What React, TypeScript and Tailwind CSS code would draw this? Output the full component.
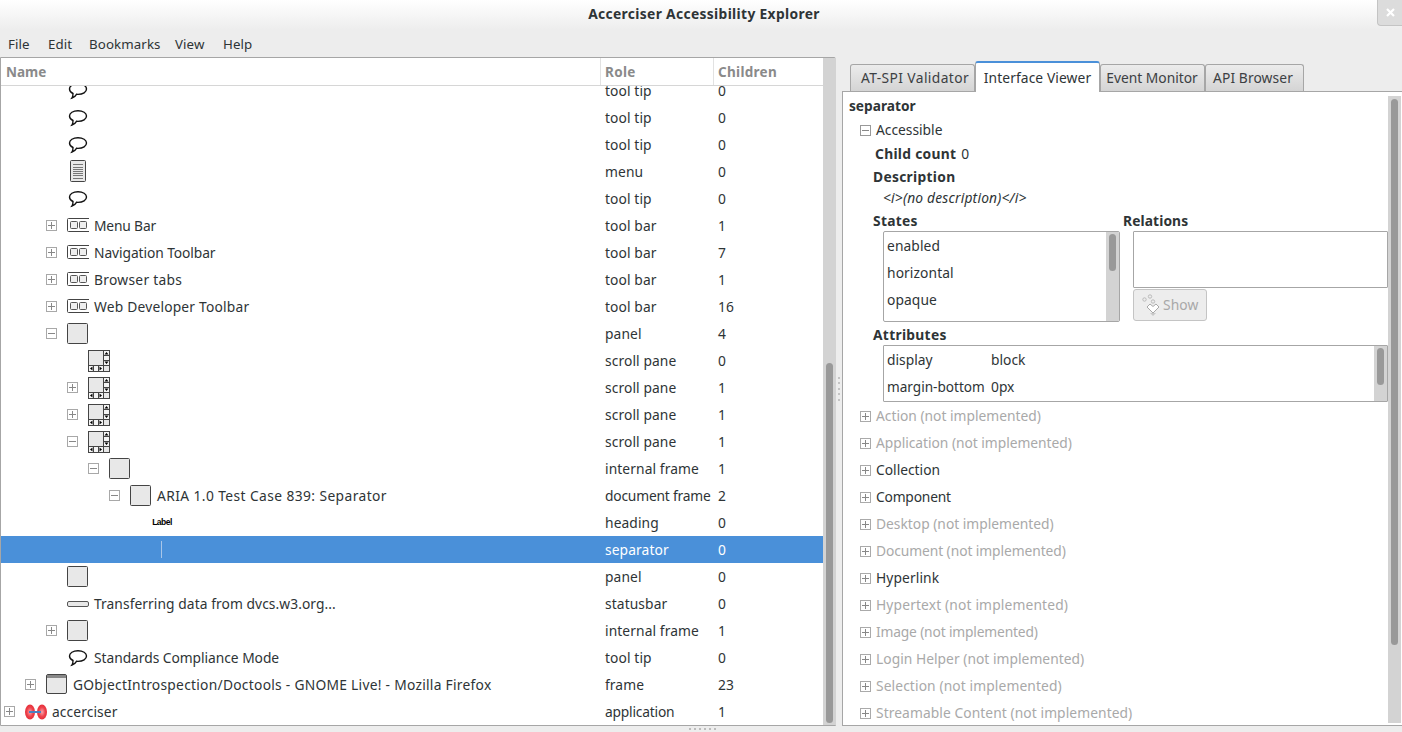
import React from "react";

const F = "[font-family:'Noto_Sans',sans-serif]";

function Bubble() {
  return (
    <svg width="22" height="20" viewBox="0 0 22 20" fill="none">
      <path d="M2.500 8C2.500 5 6 2.700 11 2.700S19.500 5 19.500 8 16 13.400 11 13.400C10.500 13.400 10 13.400 9.500 13.300 8.500 15 7 16.500 5 17 5.800 16 6 15 6 12.500 3.800 11.500 2.500 10 2.500 8z" fill="#fff" stroke="#111" strokeWidth="1.400" />
    </svg>
  );
}
function MenuIcon() {
  return (
    <svg width="22" height="23" viewBox="0 0 22 23" fill="none">
      <rect x="3.500" y="0.500" width="15" height="21" rx="1" fill="#e8e8e8" stroke="#444" />
      {[4, 7, 9, 11, 13, 15, 18].map((y) => (
        <path key={y} d={`M6 ${y + 0.5}h10`} stroke="#777" />
      ))}
    </svg>
  );
}
function ToolbarIcon() {
  return (
    <svg width="22" height="15" viewBox="0 0 22 15" fill="none">
      <path d="M22 .5H1.500a1 1 0 0 0-1 1v11a1 1 0 0 0 1 1H22" stroke="#444" />
      <rect x="3.500" y="3.500" width="7" height="7" rx="1" fill="#eee" stroke="#555" />
      <rect x="12.500" y="3.500" width="7" height="7" rx="1" fill="#eee" stroke="#555" />
    </svg>
  );
}
function PanelIcon() {
  return (
    <svg width="22" height="22" viewBox="0 0 22 22" fill="none">
      <rect x="0.500" y="0.500" width="20" height="20" rx="1" fill="#e8e8e8" stroke="#444" />
    </svg>
  );
}
function ScrollPaneIcon() {
  return (
    <svg width="22" height="22" viewBox="0 0 22 22" fill="none">
      <g shapeRendering="crispEdges">
        <rect x="0.500" y="0.500" width="21" height="21" fill="#e8e8e8" stroke="#444" />
        <rect x="16" y="1" width="5" height="14" fill="#f4f4f4" />
        <rect x="1" y="16" width="14" height="5" fill="#f4f4f4" />
        <path d="M15.500 1v20M1 15.500h20M15.500 5.500h6M15.500 10.500h6M5.500 15.500v6M10.500 15.500v6" stroke="#444" />
      </g>
      <path d="M18.500 2l2 2.500h-4zM18.500 14l-2-2.500h4zM2 18.500l2.500-2v4zM14 18.500l-2.500-2v4z" fill="#000" />
    </svg>
  );
}
function StatusIcon() {
  return (
    <svg width="22" height="8" viewBox="0 0 22 8" fill="none">
      <rect x="0.500" y="1.500" width="21" height="5" rx="1.500" fill="#e8e8e8" stroke="#555" />
    </svg>
  );
}
function FrameIcon() {
  return (
    <svg width="22" height="21" viewBox="0 0 22 21" fill="none">
      <rect x="0.500" y="0.500" width="20" height="19" rx="1.500" fill="#e8e8e8" stroke="#444" />
      <rect x="1" y="1" width="19" height="3" fill="#888" />
    </svg>
  );
}
function LogoIcon() {
  return (
    <svg width="22" height="16" viewBox="0 0 22 16" fill="none">
      <defs>
        <radialGradient id="lg" cx="50%" cy="50%" r="62%">
          <stop offset="0" stopColor="#f8a8ae" />
          <stop offset="0.5" stopColor="#ee424c" />
          <stop offset="1" stopColor="#e0242e" />
        </radialGradient>
      </defs>
      <ellipse cx="5" cy="8" rx="5" ry="7.500" fill="url(#lg)" />
      <ellipse cx="17" cy="8" rx="5" ry="7.500" fill="url(#lg)" />
      <rect x="4" y="7" width="12" height="2" fill="#4a7fc0" />
    </svg>
  );
}
function LabelIcon() {
  return (
    <span className="block w-[22px] text-center font-bold text-[8.500px] leading-none tracking-[-0.500px] text-black [font-family:'Liberation_Sans',sans-serif]">
      Label
    </span>
  );
}
function SepIcon() {
  return <span className="block w-[1px] h-[17px] ml-[10px] bg-[#a9c6e8]" />;
}

function Exp({ open, color = "#a8a8a8" }: { open: boolean; color?: string }) {
  return (
    <svg width="11" height="11" viewBox="0 0 11 11" fill="none" shapeRendering="crispEdges" className="shrink-0">
      <rect x="0.500" y="0.500" width="10" height="10" rx="1" fill="#fff" stroke={color} />
      <path d="M2 5.500h7" stroke="#888" />
      {!open && <path d="M5.500 2v7" stroke="#888" />}
    </svg>
  );
}

type Row = {
  d: number;
  exp?: "o" | "c";
  icon: React.ReactNode;
  name?: string;
  tr?: string;
  role: string;
  rt?: string;
  n: string;
  sel?: boolean;
};

const rows: Row[] = [
  { d: 2, icon: <Bubble />, role: "tool tip", n: "0" },
  { d: 2, icon: <Bubble />, role: "tool tip", n: "0" },
  { d: 2, icon: <Bubble />, role: "tool tip", n: "0" },
  { d: 2, icon: <MenuIcon />, role: "menu", n: "0" },
  { d: 2, icon: <Bubble />, role: "tool tip", n: "0" },
  { d: 2, exp: "c", icon: <ToolbarIcon />, name: "Menu Bar", tr: "tracking-[-0.170px]", role: "tool bar", n: "1" },
  { d: 2, exp: "c", icon: <ToolbarIcon />, name: "Navigation Toolbar", tr: "tracking-[-0.080px]", role: "tool bar", n: "7" },
  { d: 2, exp: "c", icon: <ToolbarIcon />, name: "Browser tabs", tr: "tracking-[0.280px]", role: "tool bar", n: "1" },
  { d: 2, exp: "c", icon: <ToolbarIcon />, name: "Web Developer Toolbar", tr: "tracking-[0.200px]", role: "tool bar", n: "16" },
  { d: 2, exp: "o", icon: <PanelIcon />, role: "panel", n: "4" },
  { d: 3, icon: <ScrollPaneIcon />, role: "scroll pane", n: "0" },
  { d: 3, exp: "c", icon: <ScrollPaneIcon />, role: "scroll pane", n: "1" },
  { d: 3, exp: "c", icon: <ScrollPaneIcon />, role: "scroll pane", n: "1" },
  { d: 3, exp: "o", icon: <ScrollPaneIcon />, role: "scroll pane", n: "1" },
  { d: 4, exp: "o", icon: <PanelIcon />, role: "internal frame", n: "1" },
  { d: 5, exp: "o", icon: <PanelIcon />, name: "ARIA 1.0 Test Case 839: Separator", tr: "tracking-[0.410px]", role: "document frame", rt: "tracking-[-0.200px]", n: "2" },
  { d: 6, icon: <LabelIcon />, role: "heading", n: "0" },
  { d: 6, icon: <SepIcon />, role: "separator", n: "0", sel: true },
  { d: 2, icon: <PanelIcon />, role: "panel", n: "0" },
  { d: 2, icon: <StatusIcon />, name: "Transferring data from dvcs.w3.org...", tr: "tracking-[0.070px]", role: "statusbar", n: "0" },
  { d: 2, exp: "c", icon: <PanelIcon />, role: "internal frame", n: "1" },
  { d: 2, icon: <Bubble />, name: "Standards Compliance Mode", tr: "tracking-[-0.040px]", role: "tool tip", n: "0" },
  { d: 1, exp: "c", icon: <FrameIcon />, name: "GObjectIntrospection/Doctools - GNOME Live! - Mozilla Firefox", tr: "tracking-[0.270px]", role: "frame", n: "23" },
  { d: 0, exp: "c", icon: <LogoIcon />, name: "accerciser", tr: "tracking-[0.100px]", role: "application", rt: "tracking-[-0.200px]", n: "1" },
];

const sections: [string, boolean, string][] = [
  ["Action (not implemented)", true, ""],
  ["Application (not implemented)", true, "tracking-[-0.030px]"],
  ["Collection", false, ""],
  ["Component", false, "tracking-[-0.200px]"],
  ["Desktop (not implemented)", true, ""],
  ["Document (not implemented)", true, "tracking-[-0.080px]"],
  ["Hyperlink", false, "tracking-[0.100px]"],
  ["Hypertext (not implemented)", true, "tracking-[0.150px]"],
  ["Image (not implemented)", true, "tracking-[-0.170px]"],
  ["Login Helper (not implemented)", true, "tracking-[0.030px]"],
  ["Selection (not implemented)", true, "tracking-[0.110px]"],
  ["Streamable Content (not implemented)", true, "tracking-[0.080px]"],
];

function VScroll({ thumb }: { thumb: string }) {
  return (
    <div className="w-[13px] shrink-0 bg-[#d3d3d3] flex justify-center pt-[2px]">
      <div className={`w-[7px] rounded-[4px] bg-[#999] ${thumb}`} />
    </div>
  );
}

function HDots() {
  return (
    <div className="flex gap-[3px]">
      {[0, 1, 2, 3, 4, 5].map((i) => (
        <span key={i} className="w-[2px] h-[2px] bg-[#bcbcbc]" />
      ))}
    </div>
  );
}
function VDots() {
  return (
    <div className="flex flex-col gap-[3.500px]">
      {[0, 1, 2, 3, 4].map((i) => (
        <span key={i} className="w-[2px] h-[2px] bg-[#c4c4c4]" />
      ))}
    </div>
  );
}

const menus: [string, string][] = [
  ["File", "w-[40px]"],
  ["Edit", "w-[41px]"],
  ["Bookmarks", "w-[86px]"],
  ["View", "w-[48px]"],
  ["Help", "w-[40px]"],
];

const tabs: [string, string, string][] = [
  ["AT-SPI Validator", "w-[125px]", "pl-[5px] tracking-[0.400px]"],
  ["Interface Viewer", "w-[125px]", "tracking-[0.100px]"],
  ["Event Monitor", "w-[105px]", "pr-[1px]"],
  ["API Browser", "w-[99px]", "pr-[3px] tracking-[0.100px]"],
];

export default function App() {
  return (
    <div className={`w-[1402px] h-[732px] overflow-hidden flex flex-col bg-[#ededed] text-[#2e3436] text-[13.800px] ${F}`}>
      <div className="h-[30px] shrink-0 relative flex items-center justify-center pl-[6px] pb-[2px] bg-gradient-to-b from-white to-[#ededed]">
        <span className="font-bold text-[#2e3436] tracking-[0.350px]">Accerciser Accessibility Explorer</span>
        <div className="absolute right-0 top-0 w-[25px] h-[26px] rounded-bl-[4px] border-l border-b border-[#c4c4c4] bg-[#dcdcdc] flex items-center justify-center">
          <svg width="9" height="9" viewBox="0 0 9 9"><path d="M1 1l7 7M8 1L1 8" stroke="#fff" strokeWidth="2.200" /></svg>
        </div>
      </div>
      <div className="h-[27px] shrink-0 flex items-center pl-[8px] pt-[2px] text-[13.300px] tracking-[0.100px]">
        {menus.map(([t, w]) => <span key={t} className={w}>{t}</span>)}
      </div>
      <div className="h-[669px] shrink-0 flex">
        <div className="w-[836px] shrink-0 flex border border-[#a6a6a6] rounded-tr-[2px] bg-white">
          <div className="w-[822px] shrink-0 flex flex-col overflow-hidden">
            <div className="h-[28px] shrink-0 flex items-center border-b border-[#d6d6d6] font-bold text-[#8a8a8a] text-[13.500px] tracking-[0.300px] bg-white relative z-10">
              <div className="w-[600px] pl-[5px] pt-[2px] h-full flex items-center border-r border-[#e2e2e2] tracking-[0px]">Name</div>
              <div className="w-[113px] pl-[4px] pt-[2px] h-full flex items-center border-r border-[#e2e2e2]">Role</div>
              <div className="pl-[4px] pt-[2px]">Children</div>
            </div>
            <div className="flex-1 overflow-hidden">
              <div className="-mt-[9px]">
                {rows.map((r, i) => (
                  <div key={i} className={`h-[27px] flex items-center ${r.sel ? "bg-[#4a90d9] text-white" : ""}`}>
                    <div className="w-[601px] shrink-0 flex items-center" style={{ paddingLeft: r.d * 21 + 3 }}>
                      <span className="w-[11px] h-[11px] shrink-0">{r.exp && <Exp open={r.exp === "o"} />}</span>
                      <span className="w-[22px] ml-[10px] shrink-0 flex items-center">{r.icon}</span>
                      {r.name && <span className={`ml-[5px] pt-[1px] whitespace-nowrap ${r.tr ?? ""}`}>{r.name}</span>}
                    </div>
                    <div className={`w-[113px] shrink-0 pl-[3px] pt-[1px] whitespace-nowrap ${r.rt ?? "tracking-[0.100px]"}`}>{r.role}</div>
                    <div className="pl-[3px] pt-[1px]">{r.n}</div>
                  </div>
                ))}
              </div>
            </div>
          </div>
          <div className="w-[13px] shrink-0 bg-[#d3d3d3] flex justify-center items-end pb-[2px]">
            <div className="w-[7px] h-[360px] rounded-[4px] bg-[#999]" />
          </div>
        </div>

        <div className="w-[6px] shrink-0 flex items-center justify-center pb-[6px]"><VDots /></div>

        <div className="flex-1 flex flex-col">
          <div className="h-[34px] shrink-0 flex items-end pl-[8px]">
            {tabs.map(([t, w, x], i) =>
              i === 1 ? (
                <div key={t} className={`${w} ${x} h-[31px] -mb-[1px] pt-[1px] relative z-10 flex items-center justify-center bg-white border-x border-t-2 border-[#a6a6a6] border-t-[#4a90d9] rounded-t-[3px] text-[#2e3436]`}>{t}</div>
              ) : (
                <div key={t} className={`${w} ${x} h-[27px] flex items-center justify-center bg-gradient-to-b from-[#ececec] to-[#d4d4d4] border-x border-t border-[#a6a6a6] rounded-t-[3px] text-[#3c4043]`}>{t}</div>
              )
            )}
          </div>
          <div className="flex-1 flex border-t border-l border-b border-[#a6a6a6] bg-white overflow-hidden pt-[4px]">
            <div className="flex-1 min-w-0 -mt-[4px] overflow-hidden pl-[6px]">
              <div className="h-[17px] mt-[6px] flex items-center font-bold text-[13.700px]">separator</div>
              <div className="h-[27px] mt-[2px] pl-[11px] flex items-center gap-[5px]"><Exp open color="#999" />Accessible</div>
              <div className="h-[20px] pl-[26px] flex items-center gap-[5px]"><b className="tracking-[0.300px]">Child count</b><span>0</span></div>
              <div className="h-[20px] mt-[3px] pl-[24px] flex items-center font-bold tracking-[0.300px]">Description</div>
              <div className="h-[20px] mt-[1px] pl-[34px] flex items-center italic tracking-[0.200px]">&lt;i&gt;(no description)&lt;/i&gt;</div>
              <div className="flex mt-[4px] pl-[24px] w-[539px]">
                <div className="w-[250px] shrink-0">
                  <div className="h-[19px] flex items-center font-bold tracking-[0.300px]">States</div>
                  <div className="h-[91px] ml-[10px] w-[237px] border border-[#a6a6a6] rounded-[2px] flex overflow-hidden">
                    <div className="flex-1 pl-[3px] pt-[1px] tracking-[0.100px]">
                      <div className="h-[27px] flex items-center">enabled</div>
                      <div className="h-[27px] flex items-center">horizontal</div>
                      <div className="h-[27px] flex items-center">opaque</div>
                    </div>
                    <VScroll thumb="h-[37px]" />
                  </div>
                </div>
                <div className="flex-1">
                  <div className="h-[19px] flex items-center font-bold tracking-[0.100px]">Relations</div>
                  <div className="h-[57px] ml-[10px] border border-[#a6a6a6] rounded-[1px]" />
                  <div className="ml-[10px] mt-[1px] w-[74px] h-[32px] rounded-[3px] border border-[#c4c4c4] bg-[#ededed] flex items-center text-[#a8a8a8] pl-[7px]">
                    <svg width="22" height="24" viewBox="0 0 22 24" fill="none" className="shrink-0">
                      <circle cx="3.500" cy="6.500" r="1.700" stroke="#bbb" /><circle cx="9" cy="3.500" r="1.700" stroke="#bbb" /><circle cx="12" cy="8.500" r="1.700" stroke="#bbb" />
                      <path d="M6 14l3-3 3 2.500 3-2.500 3 3-6 6z" fill="#fff" stroke="#a8a8a8" /><path d="M9 20h6l-3 3z" fill="#c8c8c8" />
                    </svg>
                    <span className="tracking-[0.100px]">Show</span>
                  </div>
                </div>
              </div>
              <div className="h-[18px] mt-[4px] pl-[24px] flex items-center font-bold tracking-[0.300px]">Attributes</div>
              <div className="ml-[34px] w-[505px] h-[57px] mt-[1px] border border-[#a6a6a6] rounded-[1px] flex overflow-hidden">
                <div className="flex-1 pl-[3px] pt-[1px]">
                  <div className="h-[27px] flex items-center"><span className="w-[104px]">display</span>block</div>
                  <div className="h-[27px] flex items-center"><span className="w-[104px] whitespace-nowrap text-[13.600px]">margin-bottom</span>0px</div>
                </div>
                <VScroll thumb="h-[37px]" />
              </div>
              <div className="mt-[1px]">
                {sections.map(([t, dim, tr]) => (
                  <div key={t} className={`h-[27px] pl-[11px] flex items-center gap-[5px] ${dim ? "text-[#a9a9a9]" : ""}`}>
                    <Exp open={false} color="#aaa" /><span className={tr}>{t}</span>
                  </div>
                ))}
              </div>
            </div>
            <div className="w-[13px] mr-[1px] shrink-0 h-[627px] bg-[#d3d3d3] flex justify-center pt-[3px]">
              <div className="w-[7px] h-[546px] rounded-[4px] bg-[#999]" />
            </div>
          </div>
        </div>
      </div>
      <div className="flex-1 flex items-center justify-center pl-[2px]"><HDots /></div>
    </div>
  );
}
